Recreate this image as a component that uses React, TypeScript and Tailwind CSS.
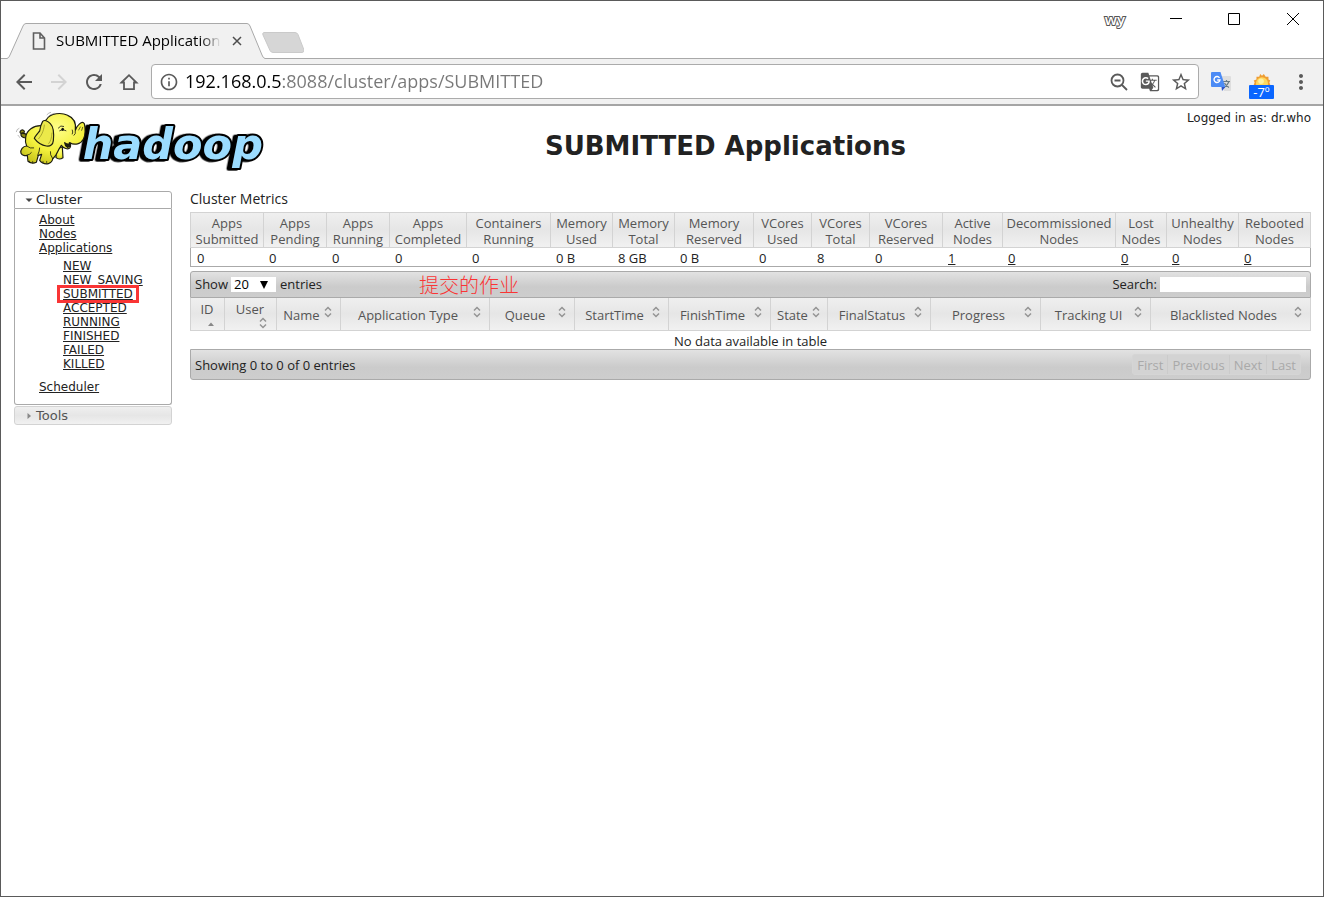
import React from "react";
import {
  MdArrowBack,
  MdArrowForward,
  MdRefresh,
  MdGTranslate,
  MdStarBorder,
  MdMoreVert,
  MdInfoOutline,
} from "react-icons/md";

const metrics = [
  { name: ["Apps", "Submitted"], value: "0", w: "w-[73px]" },
  { name: ["Apps", "Pending"], value: "0", w: "w-[63px]" },
  { name: ["Apps", "Running"], value: "0", w: "w-[63px]" },
  { name: ["Apps", "Completed"], value: "0", w: "w-[77px]" },
  { name: ["Containers", "Running"], value: "0", w: "w-[84px]" },
  { name: ["Memory", "Used"], value: "0 B", w: "w-[62px]" },
  { name: ["Memory", "Total"], value: "8 GB", w: "w-[62px]" },
  { name: ["Memory", "Reserved"], value: "0 B", w: "w-[79px]" },
  { name: ["VCores", "Used"], value: "0", w: "w-[58px]" },
  { name: ["VCores", "Total"], value: "8", w: "w-[58px]" },
  { name: ["VCores", "Reserved"], value: "0", w: "w-[73px]" },
  { name: ["Active", "Nodes"], value: "1", w: "w-[60px]", link: true },
  { name: ["Decommissioned", "Nodes"], value: "0", w: "w-[113px]", link: true },
  { name: ["Lost", "Nodes"], value: "0", w: "w-[51px]", link: true },
  { name: ["Unhealthy", "Nodes"], value: "0", w: "w-[72px]", link: true },
  { name: ["Rebooted", "Nodes"], value: "0", w: "w-[73px]", link: true },
];

const columns = [
  { name: "ID", w: "w-[34px]", stacked: true, sorted: true },
  { name: "User", w: "w-[52px]", stacked: true },
  { name: "Name", w: "w-[64px]" },
  { name: "Application Type", w: "w-[149px]" },
  { name: "Queue", w: "w-[85px]" },
  { name: "StartTime", w: "w-[94px]" },
  { name: "FinishTime", w: "w-[102px]" },
  { name: "State", w: "w-[57px]" },
  { name: "FinalStatus", w: "w-[103px]" },
  { name: "Progress", w: "w-[110px]" },
  { name: "Tracking UI", w: "w-[110px]" },
  { name: "Blacklisted Nodes", w: "w-[161px]" },
];

const states = ["NEW", "NEW_SAVING", "SUBMITTED", "ACCEPTED", "RUNNING", "FINISHED", "FAILED", "KILLED"];

const headFill = "bg-linear-to-b from-[#efefef] from-0% via-[#e6e6e6] via-50% to-[#f1f1f1]";
const barFill = "bg-linear-to-b from-[#e2e2e2] via-[#cbcbcb] via-60% to-[#cdcdcd]";

function SortIcon({ sorted }: { sorted?: boolean }) {
  return (
    <svg viewBox="0 0 16 12" className="h-3 w-4 shrink-0" aria-hidden="true">
      {sorted ? (
        <path d="M5 9h6L8 5.500z" fill="#888" />
      ) : (
        <path d="M5 4.500 8 1.500l3 3M5 7.500l3 3 3-3" fill="none" stroke="#949494" strokeWidth="1.500" />
      )}
    </svg>
  );
}

function HadoopLogo() {
  return (
    <svg viewBox="42 9 750 198" className="h-[66px] w-[250px] shrink-0" role="img" aria-label="hadoop">
      <defs>
        <radialGradient id="hide" cx="0.55" cy="0.3" r="0.75">
          <stop offset="0" stopColor="#ffff8a" />
          <stop offset="0.6" stopColor="#f3f03c" />
          <stop offset="1" stopColor="#c9c51c" />
        </radialGradient>
      </defs>
      <text
        x="248"
        y="163"
        fontFamily="DejaVu Sans"
        fontWeight="700"
        fontStyle="oblique"
        fontSize="129"
        fill="#9bdcff"
        stroke="#000"
        strokeWidth="12"
        strokeLinejoin="round"
        paintOrder="stroke"
        className="[filter:drop-shadow(-10px_2px_0_#000)]"
      >
        hadoop
      </text>
      <g stroke="#1c1c10" strokeWidth="3.500" strokeLinecap="round" strokeLinejoin="round" fill="none">
        <path d="M77 99C66 99 60 91 64 85C68 81 74 86 78 88M64 86C56 82 62 74 69 75C75 77 74 83 69 86" fill="#8d8a1a" />
        <path d="M168 132L168 158Q178 166 189 158L187 126Z" fill="url(#hide)" />
        <path
          d="M124 62C101 61 79 76 77 97C75 109 77 117 80 123C69 123 60 134 63 145C66 151 75 153 82 151L84 169Q96 178 109 172L115 151L125 148L119 166Q129 179 145 176Q157 171 158 162Q169 151 176 134L184 121C190 130 205 135 210 128C214 122 211 117 208 113C225 122 243 117 250 103C256 91 256 70 253 56Q248 47 237 58Q229 65 226 76C229 55 221 38 203 31C185 22 151 23 139 44Z"
          fill="url(#hide)"
        />
        <path d="M194 113Q204 121 212 114Q211 127 202 127Q195 123 194 113Z" fill="#22210d" />
        <path
          d="M128 49C122 59 120 71 119 78C113 85 105 93 103 100C112 112 126 121 139 123C151 125 159 119 160 107C162 88 160 65 151 56C143 47 133 44 128 49Z"
          fill="#ece94a"
        />
        <path d="M133 60C131 80 123 93 116 101M156 84Q155 106 146 116" strokeWidth="2" stroke="#8c891c" />
        <path d="M175 69Q182 59 191 64M179 77Q188 69 198 77M226 79Q228 87 222 91M217 75Q220 81 217 87" strokeWidth="2.500" />
        <ellipse cx="188" cy="73" rx="4" ry="5" fill="#111" stroke="none" />
        <path d="M241 66L236 75M248 67L245 76" strokeWidth="2" />
        <path d="M80 123Q91 132 101 129M113 151Q119 137 119 129M158 161Q149 148 151 140M80 151Q90 149 94 143" strokeWidth="2.500" />
        <path d="M88 168v5M98 169v5M129 169v5M140 169v5" strokeWidth="2" />
        <path d="M142 37Q151 27 163 25M49 80Q50 72 57 70M54 91Q56 95 60 98M141 29Q146 23 152 22" strokeWidth="1.500" stroke="#777" />
      </g>
    </svg>
  );
}

function BrowserChrome() {
  return (
    <header className="font-['Open_Sans','Noto_Sans',sans-serif]">
      <div className="flex h-[57px] items-end justify-between bg-white">
        <div className="flex items-end pl-1.5">
          <div className="relative flex h-[35px] w-[258px] items-center pr-5 pl-[25px]">
            <svg viewBox="0 0 258 36" className="absolute top-0 left-0 h-9 w-[258px]" aria-hidden="true">
              <path d="M0 35.500Q2 35 3 32L16 3Q17 .5 19 .5H240Q242 .5 243 3L255 32Q256 35 258 35.500V36H0Z" fill="#f1f1f1" />
              <path d="M0 35.500Q2 35 3 32L16 3Q17 .5 19 .5H240Q242 .5 243 3L255 32Q256 35 258 35.500" fill="none" stroke="#a9a9a9" />
            </svg>
            <svg viewBox="0 0 14 18" className="relative h-[18px] w-3.5 shrink-0" fill="none" stroke="#5f5f5f" strokeWidth="1.600" aria-hidden="true">
              <path d="M1.500 1H8l4.500 5v11h-11zM8 1v5h4.500" />
            </svg>
            <span className="relative ml-2.5 flex-1 overflow-hidden bg-linear-to-r from-black from-85% to-[#f1f1f1] bg-clip-text pb-0.5 text-[15px] leading-5 whitespace-nowrap text-transparent">
              SUBMITTED Applications
            </span>
            <button aria-label="Close tab" className="relative ml-2 flex size-4 items-center justify-center">
              <svg viewBox="0 0 10 10" className="size-2.5" stroke="#4d4d4d" strokeWidth="1.500">
                <path d="M1 1l8 8M9 1 1 9" />
              </svg>
            </button>
          </div>
          <button aria-label="New tab" className="-ml-[5px] h-7">
            <svg viewBox="0 0 44 28" className="h-7 w-11">
              <path d="M4 2.500H35Q37 2.500 38 4.500L44 20Q44 22.500 42 22.500H13Q11 22.500 10 20.500L3 5Q2 3 4 2.500Z" fill="#d6d6d6" stroke="#cacaca" />
            </svg>
          </button>
        </div>
        <div className="flex h-9 items-center self-start">
          <button className="mr-2.5 w-11">
            <svg viewBox="0 0 44 24" className="h-6 w-11" aria-label="wy">
              <text x="22" y="18" textAnchor="middle" fontSize="15" fontWeight="600" fill="#fff" stroke="#555" strokeWidth="2" paintOrder="stroke">wy</text>
            </svg>
          </button>
          <button aria-label="Minimize" className="flex w-[58px] justify-center">
            <svg viewBox="0 0 12 12" className="size-3" stroke="#000"><path d="M0 5.500h12" /></svg>
          </button>
          <button aria-label="Maximize" className="flex w-[58px] justify-center">
            <svg viewBox="0 0 12 12" className="size-3" stroke="#000" fill="none"><path d="M.5.5h11v11H.5z" /></svg>
          </button>
          <button aria-label="Close" className="flex w-[60px] justify-center">
            <svg viewBox="0 0 12 12" className="size-3" stroke="#000"><path d="m0 0 12 12M12 0 0 12" /></svg>
          </button>
        </div>
      </div>
      <div className="flex h-12 items-center border-t border-b-2 border-t-[#a9a9a9] border-b-[#a5a5a5] bg-[#f1f1f1] pr-2.5 pl-[11px] text-[#5a5a5a]">
        <div className="flex gap-[11px]">
          <button aria-label="Back"><MdArrowBack size={24} /></button>
          <button aria-label="Forward" className="text-[#d3d3d3]"><MdArrowForward size={24} /></button>
          <button aria-label="Reload"><MdRefresh size={24} /></button>
          <button aria-label="Home">
            <svg viewBox="0 0 24 24" className="size-6" fill="none" stroke="currentColor" strokeWidth="1.800">
              <path d="M4.500 12.500 12 5.200l7.500 7.300H17v6.700H7v-6.700z" />
            </svg>
          </button>
        </div>
        <div className="ml-2.5 flex h-[35px] flex-1 items-center rounded-sm border border-[#ababab] bg-white pr-1.5 pl-[7px]">
          <MdInfoOutline size={20} />
          <label htmlFor="address" className="sr-only">Address</label>
          <input
            id="address"
            defaultValue="192.168.0.5:8088/cluster/apps/SUBMITTED"
            className="ml-1.5 h-8 flex-1 bg-[linear-gradient(90deg,#000_96px,#777_96px)] bg-clip-text pb-0.5 text-[18px] text-transparent outline-none"
          />
          <div className="flex items-center gap-2.5">
            <button aria-label="Zoom">
              <svg viewBox="0 0 22 22" className="size-[22px]" fill="none" stroke="currentColor" strokeWidth="1.800">
                <circle cx="9.500" cy="9.500" r="6" />
                <path d="m14 14 5 5M6.500 9.500h6" />
              </svg>
            </button>
            <button aria-label="Translate this page"><MdGTranslate size={20} /></button>
            <button aria-label="Bookmark"><MdStarBorder size={22} /></button>
          </div>
        </div>
        <button aria-label="Google Translate" className="ml-3">
          <svg viewBox="0 0 20 20" className="size-5">
            <path d="M8 4h11q1 0 1 1v13q0 1-1 1h-6z" fill="#dedede" />
            <path d="M12 9.500h7M15.500 8v1.500M18 9.500q-1.500 4-5 6M13.500 11q1.500 3 4.500 4.500" stroke="#687b85" strokeWidth="1.200" fill="none" />
            <path d="M1 0h8.500l4.800 15H1q-1 0-1-1V1q0-1 1-1z" fill="#4c8bf5" />
            <path d="m10.500 15 3.800 0-3.300 4z" fill="#2c52c6" />
            <path d="M8.500 5.800A3 3 0 1 0 9 8H6.200" stroke="#fff" strokeWidth="1.400" fill="none" />
          </svg>
        </button>
        <button aria-label="Weather" className="ml-[18px] flex flex-col items-center pt-2">
          <svg viewBox="0 0 20 13" className="h-3 w-5">
            <path d="m1 13 1-3-1-2 3-1V4l3 0 1-3 2 2 2-2 2 3h3v3l2 1-1 2 1 3z" fill="#ef9d32" />
            <circle cx="10" cy="11" r="6.500" fill="#ffd75d" />
            <circle cx="9" cy="9" r="3" fill="#fff0a0" />
          </svg>
          <span className="h-3.5 w-[25px] rounded-[1px] bg-[#0a66ff] text-center text-[13px] leading-[14px] text-white">-7º</span>
        </button>
        <button aria-label="Menu" className="ml-[15px]"><MdMoreVert size={24} /></button>
      </div>
    </header>
  );
}

function Sidebar() {
  const link = "underline";
  return (
    <nav className="w-[158px] shrink-0 font-['DejaVu_Sans',sans-serif] text-[12px] leading-[14px] text-[#222]">
      <div className="rounded-t-[3px] border border-[#aaa] bg-white">
        <button className="flex h-4 w-full items-center pl-2.5 text-[13px]">
          <svg viewBox="0 0 8 8" className="mr-[3px] size-2" aria-hidden="true"><path d="M.5 2.500h7L4 6z" fill="#444" /></svg>
          Cluster
        </button>
      </div>
      <div className="rounded-b-[3px] border border-t-0 border-[#aaa] bg-white pt-1 pb-2.5 pl-6">
        <ul>
          <li><a href="#about" className={link}>About</a></li>
          <li><a href="#nodes" className={link}>Nodes</a></li>
          <li>
            <a href="#apps" className={link}>Applications</a>
            <ul className="py-1 pl-6">
              {states.map((s) => (
                <li key={s} className="relative">
                  <a href={"#" + s} className={link}>{s}</a>
                  {s === "SUBMITTED" && (
                    <span className="absolute -top-0.5 -left-1.5 h-[18px] w-[82px] border-3 border-[#f93535]" />
                  )}
                </li>
              ))}
            </ul>
          </li>
          <li className="pt-[5px]"><a href="#scheduler" className={link}>Scheduler</a></li>
        </ul>
      </div>
      <button className={"mt-px flex h-[19px] w-full items-center rounded-[3px] border border-[#d3d3d3] pl-2.5 text-[13px] text-[#555] " + headFill}>
        <svg viewBox="0 0 8 8" className="mr-[3px] size-2" aria-hidden="true"><path d="M2.500 1v6L6 4z" fill="#888" /></svg>
        Tools
      </button>
    </nav>
  );
}

function MetricsTable() {
  return (
    <table className="w-full table-fixed border-separate border-spacing-0 text-[13px] leading-4">
      <thead>
        <tr>
          {metrics.map((m) => (
            <th
              key={m.name.join(" ")}
              className={"border-t border-b border-l border-[#d3d3d3] pt-0.5 font-normal whitespace-nowrap text-[#555] last:border-r " + headFill + " " + m.w}
            >
              {m.name[0]}
              <br />
              {m.name[1]}
            </th>
          ))}
        </tr>
      </thead>
      <tbody>
        <tr>
          {metrics.map((m) => (
            <td key={m.name.join(" ")} className="h-[19px] border-b border-[#aaa] pt-0.5 pl-1.5 leading-4 first:border-l last:border-r">
              {m.link ? <a href="#nodes" className="underline">{m.value}</a> : m.value}
            </td>
          ))}
        </tr>
      </tbody>
    </table>
  );
}

function AppsTable() {
  return (
    <section className="mt-1 text-[13px]">
      <div className={"relative flex h-[27px] items-center justify-between rounded-t-[3px] border border-[#aaa] px-1 " + barFill}>
        <label className="flex items-center">
          Show
          <span className="relative mr-1 ml-[3px] flex">
            <select defaultValue="20" className="h-[15px] w-[45px] appearance-none bg-white pl-[3px] leading-[15px] text-black outline-none">
              <option>20</option>
              <option>40</option>
              <option>60</option>
              <option>80</option>
              <option>100</option>
            </select>
            <svg viewBox="0 0 8 8" className="pointer-events-none absolute top-1 right-2 size-2" aria-hidden="true"><path d="M0 0h8L4 8z" /></svg>
          </span>
          entries
        </label>
        <span className="absolute top-0 left-[228px] text-[20px] leading-7 font-light text-[#f93535]">提交的作业</span>
        <label className="flex items-center">
          Search:
          <input type="text" className="ml-[3px] h-[15px] w-[146px] bg-white px-1 outline-none" />
        </label>
      </div>
      <table className="w-full table-fixed border-separate border-spacing-0">
        <thead>
          <tr>
            {columns.map((c) => (
              <th
                key={c.name}
                className={"h-[33px] border-b border-l border-[#d3d3d3] p-0 font-normal whitespace-nowrap text-[#555] last:border-r " + headFill + " " + c.w}
              >
                {c.stacked ? (
                  <button className="flex w-full flex-col pt-px pr-[5px] leading-4">
                    <span className="self-center pl-1">{c.name}</span>
                    <span className="self-end"><SortIcon sorted={c.sorted} /></span>
                  </button>
                ) : (
                  <button className="flex w-full items-center justify-between pr-1 pl-1.5 leading-4">
                    <span className="flex-1 pt-px text-center">{c.name}</span>
                    <span className="pb-1"><SortIcon /></span>
                  </button>
                )}
              </th>
            ))}
          </tr>
        </thead>
        <tbody>
          <tr>
            <td colSpan={12} className="h-[18px] p-0 pt-0.5 text-center leading-4">No data available in table</td>
          </tr>
        </tbody>
      </table>
      <div className={"flex h-[31px] items-center justify-between rounded-b-[3px] border border-[#aaa] pr-[9px] pl-1 " + barFill}>
        <span className="pt-0.5">Showing 0 to 0 of 0 entries</span>
        <div className="flex rounded-[3px] border border-[#d5d5d5] bg-[#d3d3d3] text-[#a9a9a9]">
          {["First", "Previous", "Next", "Last"].map((p) => (
            <button key={p} disabled className="h-[19px] border-l border-[#cbcbcb] px-1 leading-[18px] first:border-l-0">
              {p}
            </button>
          ))}
        </div>
      </div>
    </section>
  );
}

export default function App() {
  return (
    <div className="min-h-screen border border-[#5a5a5a] bg-white">
      <BrowserChrome />
      <div className="pt-0.5 pr-3 pl-[13px] text-[#222]">
        <div className="flex">
          <HadoopLogo />
          <h1 className="flex-1 pt-5 text-center font-['DejaVu_Sans',sans-serif] text-[26px] leading-9 font-bold">
            SUBMITTED Applications
          </h1>
          <p className="pt-0.5 font-['DejaVu_Sans',sans-serif] text-[12px] leading-4">Logged in as: dr.who</p>
        </div>
        <div className="mt-[17px] flex gap-[18px]">
          <Sidebar />
          <main className="min-w-0 flex-1 font-['Open_Sans','Noto_Sans_CJK_SC',sans-serif]">
            <h2 className="pb-[5px] text-[14px] leading-4">Cluster Metrics</h2>
            <MetricsTable />
            <AppsTable />
          </main>
        </div>
      </div>
    </div>
  );
}
